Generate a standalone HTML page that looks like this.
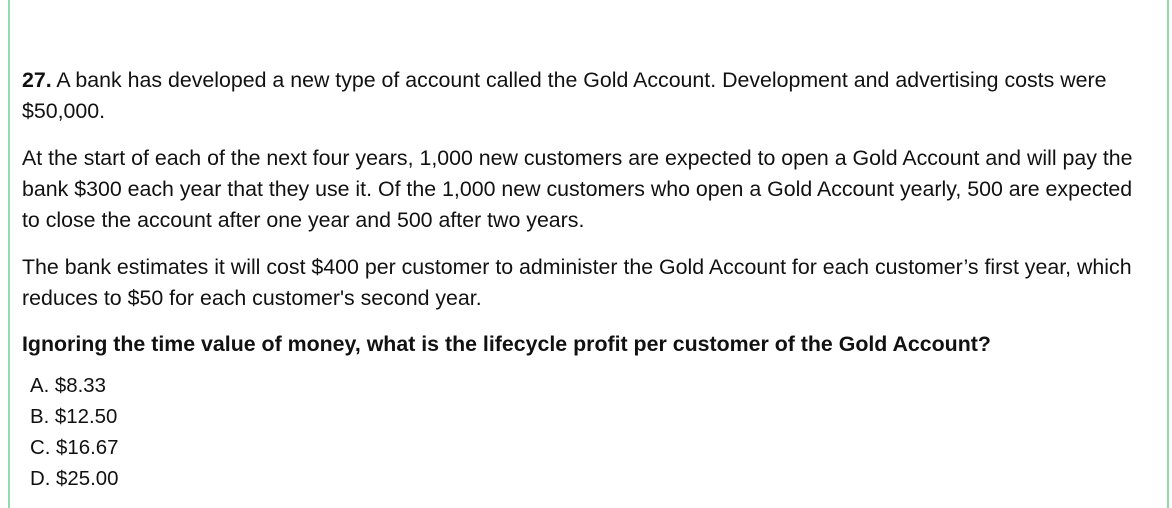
<!DOCTYPE html>
<html><head><style>
body{margin:0;width:1172px;height:508px;background:#fff;font-family:"Liberation Sans",Arial,sans-serif;color:#111;overflow:hidden}
.box{position:absolute;left:8px;top:0;width:1157px;height:508px;border-left:2px solid #8fdcaa;border-right:2px solid #8fdcaa;}
.t{position:absolute;left:22px;font-size:21.35px;line-height:31px;margin:0;width:1140px;white-space:nowrap}
.o{position:absolute;left:30px;font-size:20.4px;line-height:31px}
</style></head><body>
<div class="box"></div>
<p class="t" style="top:65px"><b>27.</b> A bank has developed a new type of account called the Gold Account. Development and advertising costs were<br>$50,000.</p>
<p class="t" style="top:143px">At the start of each of the next four years, 1,000 new customers are expected to open a Gold Account and will pay the<br>bank $300 each year that they use it. Of the 1,000 new customers who open a Gold Account yearly, 500 are expected<br>to close the account after one year and 500 after two years.</p>
<p class="t" style="top:252px">The bank estimates it will cost $400 per customer to administer the Gold Account for each customer’s first year, which<br>reduces to $50 for each customer's second year.</p>
<p class="t" style="top:329px"><b>Ignoring the time value of money, what is the lifecycle profit per customer of the Gold Account?</b></p>
<div class="o" style="top:371px">A. $8.33<br>B. $12.50<br>C. $16.67<br>D. $25.00</div>
</body></html>
